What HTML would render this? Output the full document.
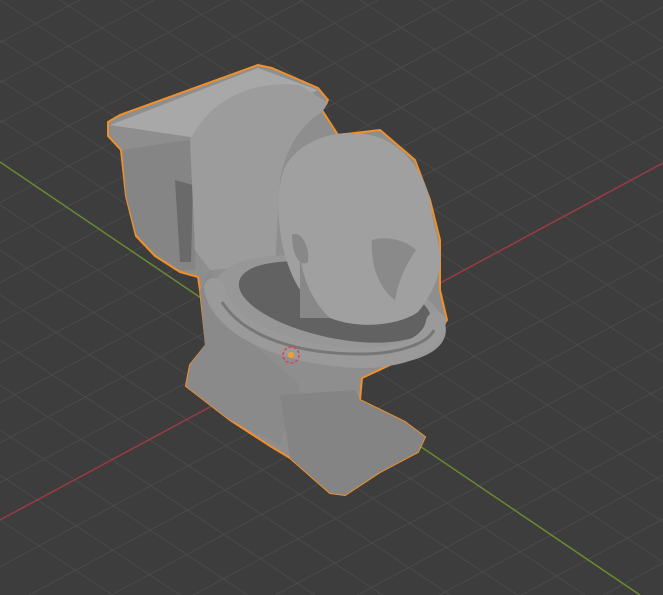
<!DOCTYPE html>
<html><head><style>html,body{margin:0;padding:0;background:#3d3d3d;overflow:hidden;width:663px;height:595px}svg{display:block;position:absolute;left:0;top:0}</style></head>
<body>
<svg width="663" height="595" viewBox="0 0 663 595" xmlns="http://www.w3.org/2000/svg" overflow="hidden">
<rect width="663" height="595" fill="#3d3d3d"/>
<g stroke="#4a4a4a" stroke-width="1" fill="none">
<line x1="-200" y1="150" x2="900" y2="-440"/>
<line x1="-200" y1="190" x2="900" y2="-400"/>
<line x1="-200" y1="230" x2="900" y2="-360"/>
<line x1="-200" y1="270" x2="900" y2="-320"/>
<line x1="-200" y1="310" x2="900" y2="-280"/>
<line x1="-200" y1="350" x2="900" y2="-240"/>
<line x1="-200" y1="390" x2="900" y2="-200"/>
<line x1="-200" y1="430" x2="900" y2="-160"/>
<line x1="-200" y1="470" x2="900" y2="-120"/>
<line x1="-200" y1="510" x2="900" y2="-80"/>
<line x1="-200" y1="550" x2="900" y2="-40"/>
<line x1="-200" y1="590" x2="900" y2="0"/>
<line x1="-200" y1="674" x2="900" y2="84"/>
<line x1="-200" y1="718" x2="900" y2="128"/>
<line x1="-200" y1="762" x2="900" y2="172"/>
<line x1="-200" y1="806" x2="900" y2="216"/>
<line x1="-200" y1="850" x2="900" y2="260"/>
<line x1="-200" y1="894" x2="900" y2="304"/>
<line x1="-200" y1="938" x2="900" y2="348"/>
<line x1="-200" y1="982" x2="900" y2="392"/>
<line x1="-200" y1="1026" x2="900" y2="436"/>
<line x1="-200" y1="1070" x2="900" y2="480"/>
<line x1="-200" y1="1114" x2="900" y2="524"/>
<line x1="0" y1="-40" x2="900" y2="560"/>
<line x1="0" y1="0" x2="900" y2="600"/>
<line x1="0" y1="40" x2="900" y2="640"/>
<line x1="0" y1="80" x2="900" y2="680"/>
<line x1="0" y1="120" x2="900" y2="720"/>
<line x1="0" y1="205" x2="900" y2="805"/>
<line x1="0" y1="250" x2="900" y2="850"/>
<line x1="0" y1="295" x2="900" y2="895"/>
<line x1="0" y1="340" x2="900" y2="940"/>
<line x1="0" y1="385" x2="900" y2="985"/>
<line x1="0" y1="430" x2="900" y2="1030"/>
<line x1="0" y1="475" x2="900" y2="1075"/>
<line x1="0" y1="520" x2="900" y2="1120"/>
<line x1="0" y1="-80" x2="900" y2="520"/>
<line x1="0" y1="-120" x2="900" y2="480"/>
<line x1="0" y1="-160" x2="900" y2="440"/>
<line x1="0" y1="-200" x2="900" y2="400"/>
<line x1="0" y1="-240" x2="900" y2="360"/>
<line x1="0" y1="-280" x2="900" y2="320"/>
<line x1="0" y1="-320" x2="900" y2="280"/>
<line x1="0" y1="-360" x2="900" y2="240"/>
<line x1="0" y1="-400" x2="900" y2="200"/>
</g>
<line x1="0" y1="520" x2="663" y2="163" stroke="#9a3a45" stroke-width="1.5"/>
<line x1="0" y1="162" x2="640" y2="595" stroke="#6a8a30" stroke-width="1.5"/>
<path d="M108,122 L120,115 L258,65 L272,68 L318,88 L328,100 L322,110 L338,135 L380,130 L415,160 L430,200 L440,240 L440,290 L447,320 L430,345 L390,365 L362,378 L360,400 L405,422 L425,437 L418,452 L380,472 L345,495 L330,493 L290,458 L270,446 L230,420 L186,386 L190,365 L206,345 L200,290 L198,277 L180,272 L155,256 L136,236 L126,196 L121,150 L108,136 Z" fill="#8e8e8e" stroke="#f0902a" stroke-width="2" stroke-linejoin="round"/>
<path d="M110,125 L258,68 L318,90 L210,140 Z" fill="#a8a8a8"/>
<path d="M122,150 L200,138 L195,270 L180,270 L155,254 L136,234 L126,196 Z" fill="#858585"/>
<path d="M175,180 L193,185 L191,262 L180,262 Z" fill="#6a6a6a"/>
<path d="M190,140 C210,100 250,80 300,85 L328,103 L322,112 C300,125 285,150 280,180 L275,265 L210,270 L195,250 Z" fill="#9c9c9c"/>
<path d="M210,270 L200,290 L205,345 L190,365 L186,386 L230,420 L280,445 L300,385 L260,350 L225,310 Z" fill="#8a8a8a"/>
<ellipse cx="330" cy="310" rx="118" ry="50" transform="rotate(12 330 310)" fill="#979797"/>
<ellipse cx="335" cy="302" rx="98" ry="36" transform="rotate(12 335 302)" fill="#626262"/>
<path d="M282,175 C292,140 345,122 385,140 C415,155 430,185 432,215 C436,235 442,250 440,268 C436,285 428,300 418,312 C400,325 360,330 330,318 C305,305 292,280 285,255 C278,230 276,200 282,175 Z" fill="#a0a0a0"/>
<path d="M300,250 C300,270 310,300 330,318 L300,318 Z" fill="#888"/>
<path d="M372,240 C390,235 408,242 416,250 C408,262 400,275 395,300 C380,290 370,265 372,240Z" fill="#8a8a8a"/>
<path d="M292,235 C300,230 310,245 308,262 C300,268 292,255 292,235Z" fill="#888"/>
<path d="M214,288 C222,330 290,356 360,358 C405,358 432,345 436,322" fill="none" stroke="#9a9a9a" stroke-width="20" stroke-linecap="round"/>
<path d="M222,302 C245,338 300,354 360,354 C400,354 428,343 434,330" fill="none" stroke="#777" stroke-width="3"/>
<path d="M280,395 L355,390 L360,400 L405,422 L425,437 L418,452 L380,472 L345,495 L330,493 L290,458 Z" fill="#848484"/>
<circle cx="291" cy="355" r="8" fill="none" stroke="#e04050" stroke-width="1.5" stroke-dasharray="3 2"/>
<circle cx="291" cy="355" r="3" fill="#f0a030"/>
</svg>
</body></html>
